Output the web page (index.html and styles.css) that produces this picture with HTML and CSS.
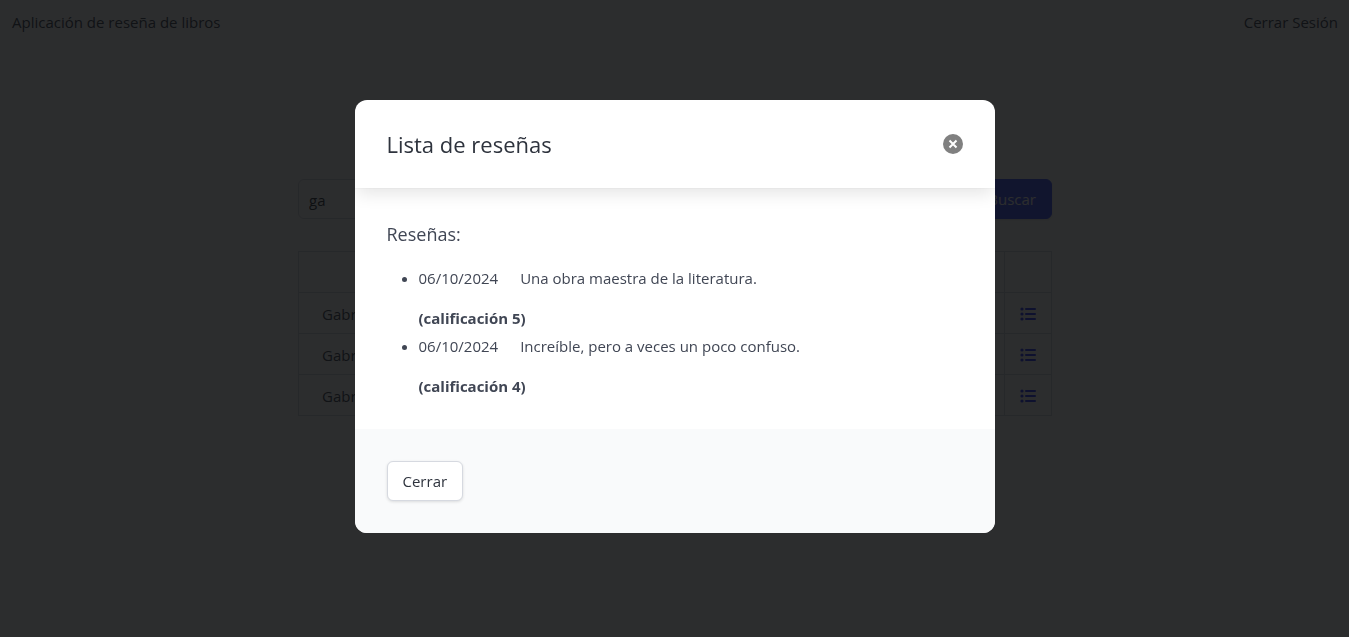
FILE: index.html
```html
<!DOCTYPE html>
<html lang="es">
<head>
  <meta charset="utf-8">
  <meta name="viewport" content="width=device-width, initial-scale=1">
  <title>Aplicación de reseña de libros</title>
  <link rel="stylesheet" href="styles.css">
</head>
<body>
  <svg class="sprite" aria-hidden="true">
    <symbol id="icon-list" viewBox="0 0 16 16">
      <circle cx="2" cy="3" r="1.600"/><circle cx="2" cy="8" r="1.600"/><circle cx="2" cy="13" r="1.600"/>
      <rect x="5" y="2" width="11" height="2" rx="1"/><rect x="5" y="7" width="11" height="2" rx="1"/><rect x="5" y="12" width="11" height="2" rx="1"/>
    </symbol>
  </svg>
  <nav class="navbar">
    <a class="navbar-item" href="#">Aplicación de reseña de libros</a>
    <a class="navbar-item" href="#">Cerrar Sesión</a>
  </nav>
  <main class="container">
    <form class="search">
      <input class="input" type="text" value="ga" aria-label="Buscar libros">
      <button class="button is-link" type="button">Buscar</button>
    </form>
    <table class="table">
      <thead>
        <tr><th></th><th></th><th class="actions"></th></tr>
      </thead>
      <tbody>
        <tr><td>Gabriel</td><td></td><td class="actions"><a href="#" aria-label="Ver reseñas"><svg class="icon"><use href="#icon-list"/></svg></a></td></tr>
        <tr><td>Gabriel</td><td></td><td class="actions"><a href="#" aria-label="Ver reseñas"><svg class="icon"><use href="#icon-list"/></svg></a></td></tr>
        <tr><td>Gabriel</td><td></td><td class="actions"><a href="#" aria-label="Ver reseñas"><svg class="icon"><use href="#icon-list"/></svg></a></td></tr>
      </tbody>
    </table>
  </main>
  <div class="modal">
    <section class="modal-card" role="dialog" aria-modal="true" aria-labelledby="modal-title">
      <header class="modal-head">
        <h1 class="modal-title" id="modal-title">Lista de reseñas</h1>
        <button class="delete" type="button" aria-label="Cerrar ventana">
          <svg class="delete-icon" viewBox="0 0 20 20"><path d="M6.500 6.500 13.500 13.500M13.500 6.500 6.500 13.500"/></svg>
        </button>
      </header>
      <div class="modal-body">
        <h2 class="subtitle">Reseñas:</h2>
        <ul class="reviews">
          <li class="review">
            <p class="review-text"><span>06/10/2024</span><span>Una obra maestra de la literatura.</span></p>
            <strong class="rating">(calificación 5)</strong>
          </li>
          <li class="review">
            <p class="review-text"><span>06/10/2024</span><span>Increíble, pero a veces un poco confuso.</span></p>
            <strong class="rating">(calificación 4)</strong>
          </li>
        </ul>
      </div>
      <footer class="modal-foot">
        <button class="button" type="button">Cerrar</button>
      </footer>
    </section>
  </div>
</body>
</html>
```
FILE: styles.css
```css
* {
  box-sizing: border-box;
}

body {
  margin: 0;
  background: #fff;
  color: #404654;
  font: 15px/24px "Segoe UI", "Open Sans", "Noto Sans", sans-serif;
}

h1, h2, p, ul {
  margin: 0;
  padding: 0;
  font-weight: 400;
}

button, input {
  font: inherit;
}

.sprite {
  position: absolute;
  width: 0;
  height: 0;
}

.navbar {
  display: flex;
  justify-content: space-between;
  padding: 10px 12px;
}

.navbar-item {
  color: #404654;
  text-decoration: none;
}

.container {
  max-width: 754px;
  margin: 0 auto;
  padding-top: 135px;
}

.search {
  display: flex;
  gap: 12px;
  margin-bottom: 32px;
}

.input {
  flex: 1;
  min-width: 0;
  height: 40px;
  padding: 6px 10px 4px;
  border: 1px solid #d6d9e0;
  border-radius: 6px;
  background: #fff;
  color: #2e333d;
}

.button {
  height: 40px;
  padding: 0 15px;
  border: 1px solid #d6d9e0;
  border-radius: 6px;
  background: #fff;
  color: #2e333d;
  box-shadow: 0 1px 3px rgba(10, 10, 10, 0.12);
}

.button.is-link {
  border-color: #4258ff;
  background: #4258ff;
  color: #fff;
}

.table {
  width: 100%;
  border-collapse: collapse;
}

.table th,
.table td {
  height: 41px;
  padding: 2px 23px 0;
  border: 1px solid #d6d9e0;
  text-align: left;
}

.table .actions {
  width: 47px;
  padding: 2px 15px 0;
}

.icon {
  display: block;
  width: 16px;
  height: 16px;
  fill: #2a3cff;
}

.modal {
  position: fixed;
  inset: 0 1px 0 0;
  display: flex;
  align-items: center;
  justify-content: center;
  padding-bottom: 4px;
  background: rgba(9, 10, 12, 0.86);
}

.modal-card {
  width: 100%;
  max-width: 640px;
  overflow: hidden;
  border-radius: 12px;
  background: #fff;
}

.modal-head {
  position: relative;
  display: flex;
  align-items: center;
  justify-content: space-between;
  padding: 32px;
  box-shadow: 0 8px 16px -2px rgba(10, 10, 10, 0.1), 0 0 0 1px rgba(10, 10, 10, 0.02);
}

.modal-title {
  color: #2e333d;
  font-size: 22px;
  line-height: 24px;
}

.delete {
  width: 20px;
  height: 20px;
  padding: 0;
  border: 0;
  border-radius: 50%;
  background: #808080;
}

.delete-icon {
  display: block;
  fill: none;
  stroke: #fff;
  stroke-width: 2;
}

.modal-body {
  padding: 32px 32px 31px;
}

.subtitle {
  margin-bottom: 18px;
  font-size: 18px;
  line-height: 28px;
}

.reviews {
  padding-left: 32px;
}

.review + .review {
  margin-top: 4px;
}

.review-text {
  display: flex;
  gap: 22px;
  margin-bottom: 16px;
}

.rating {
  display: block;
}

.modal-foot {
  padding: 32px;
  background: #f9fafb;
}
```
